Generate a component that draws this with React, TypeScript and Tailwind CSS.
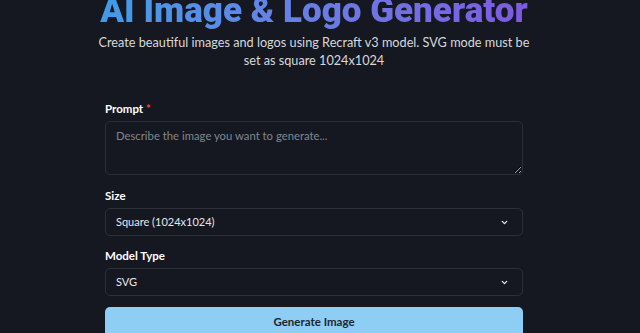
import React from "react";

function Chevron() {
  return (
    <svg width="9" height="9" viewBox="0 0 24 24" fill="none" stroke="#e5e7eb" strokeWidth="3.5" strokeLinecap="round" strokeLinejoin="round" className="mr-[3px]">
      <path d="M6 9l6 6 6-6" />
    </svg>
  );
}

export default function App() {
  const font = { fontFamily: 'Lato, "Noto Sans", sans-serif' };
  const titleFont = { fontFamily: 'Roboto, "Noto Sans", sans-serif' };
  return (
    <div className="w-[640px] h-[333px] overflow-hidden bg-[#161821]" style={font}>
      <div className="w-[628px] flex flex-col items-center">
        <h1
          className="mt-[-9px] text-[35px] leading-[40px] font-black bg-gradient-to-r from-[#3f9ce8] to-[#7d5ae0] bg-clip-text text-transparent whitespace-nowrap"
          style={titleFont}
        >
          AI Image &amp; Logo Generator
        </h1>
        <p className="mt-[2px] w-[450px] text-center text-[12.7px] leading-[18px] text-[#d6d8de]">
          Create beautiful images and logos using Recraft v3 model. SVG mode must be set as square 1024x1024
        </p>
        <form className="mt-[32px] w-[418px] flex flex-col">
          <label className="text-[11.5px] leading-[16px] font-bold text-white">
            Prompt <span className="text-[#ef4444]">*</span>
          </label>
          <textarea
            className="mt-[4px] h-[54px] w-full rounded-[5px] border border-[#2c2f39] bg-[#161821] px-[10px] py-[5px] text-[11.3px] leading-[18px] text-[#e5e7eb] placeholder:text-[#80868f] outline-none"
            placeholder="Describe the image you want to generate..."
          />
          <label className="mt-[13px] text-[11.5px] leading-[16px] font-bold text-white">Size</label>
          <div className="mt-[4px] h-[28px] w-full rounded-[5px] border border-[#2c2f39] flex items-center justify-between px-[10px]">
            <span className="text-[11px] text-[#e5e7eb]">Square (1024x1024)</span>
            <Chevron />
          </div>
          <label className="mt-[12px] text-[11.5px] leading-[16px] font-bold text-white">Model Type</label>
          <div className="mt-[4px] h-[28px] w-full rounded-[5px] border border-[#2c2f39] flex items-center justify-between px-[10px]">
            <span className="text-[11px] text-[#e5e7eb]">SVG</span>
            <Chevron />
          </div>
          <button type="button" className="mt-[11px] h-[30px] w-full rounded-[5px] bg-[#8ecdf4] text-[11.5px] font-bold text-[#1f2633] flex items-center justify-center">
            Generate Image
          </button>
        </form>
      </div>
    </div>
  );
}
